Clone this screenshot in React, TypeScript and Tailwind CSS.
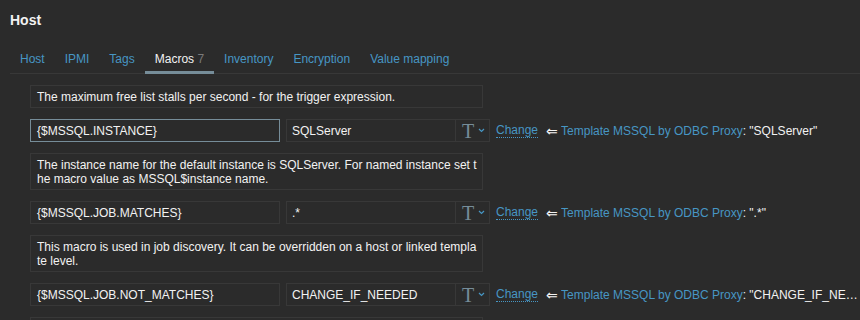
import React from 'react';

const tabs = ['Host', 'IPMI', 'Tags', 'Macros', 'Inventory', 'Encryption', 'Value mapping'];

const macros = [
  {
    description: 'The maximum free list stalls per second - for the trigger expression.',
  },
  {
    macro: '{$MSSQL.INSTANCE}',
    value: 'SQLServer',
    focused: true,
    description:
      'The instance name for the default instance is SQLServer. For named instance set the macro value as MSSQL$instance name.',
  },
  {
    macro: '{$MSSQL.JOB.MATCHES}',
    value: '.*',
    description:
      'This macro is used in job discovery. It can be overridden on a host or linked template level.',
  },
  {
    macro: '{$MSSQL.JOB.NOT_MATCHES}',
    value: 'CHANGE_IF_NEEDED',
    description: 'This macro is used in job discovery. It can be overridden on a host or linked template level.',
  },
];

function Description({ text }: { text: string }) {
  return (
    <div className="w-[453px] border border-[#383838] pl-[6px] pr-[4px] pt-[4px] pb-[3px] text-[12px] leading-[14px] text-[#f2f2f2] break-all">
      {text}
    </div>
  );
}

function MacroRow({ macro, value, focused }: { macro: string; value: string; focused?: boolean }) {
  return (
    <div className="flex items-center h-[23px] text-[12px] text-[#f2f2f2]">
      <div
        className={
          'w-[250px] h-[23px] shrink-0 flex items-center px-[6px] border ' +
          (focused ? 'border-[#768d99]' : 'border-[#383838]')
        }
      >
        {macro}
      </div>
      <div className="ml-[6px] w-[204px] h-[23px] shrink-0 flex">
        <div className="flex-1 flex items-center px-[5px] border border-[#383838]">{value}</div>
        <div className="w-[34px] flex items-center justify-center gap-[4px] pl-[2px] border border-l-0 border-[#383838]">
          <span className="font-['Liberation_Serif',serif] text-[20px] leading-[20px] text-[#768d99]">T</span>
          <svg width="7" height="5" viewBox="0 0 7 5">
            <polyline points="1,1 3.5,3.5 6,1" fill="none" stroke="#4796c4" strokeWidth="1.2" />
          </svg>
        </div>
      </div>
      <span className="ml-[6px] shrink-0 text-[#4796c4] border-b border-dotted border-[#4796c4] leading-[14px]">
        Change
      </span>
      <span className="ml-[8px] mr-[5px] w-[10px] shrink-0 text-[#f2f2f2] text-[14px] leading-[14px]">⇐</span>
      <span className="flex-1 min-w-0 truncate">
        <span className="text-[#4796c4]">Template MSSQL by ODBC Proxy</span>
        <span>: "{value}"</span>
      </span>
    </div>
  );
}

export default function App() {
  return (
    <div className="w-[860px] h-[320px] overflow-hidden bg-[#2b2b2b] font-['Liberation_Sans',Arial,sans-serif]">
      <div className="pl-[10px] pt-[12px] text-[14px] leading-[16px] font-bold text-[#f2f2f2]">Host</div>

      <div className="ml-[10px] mt-[24px] flex border-b border-[#383838]">
        {tabs.map((tab) => {
          const active = tab === 'Macros';
          return (
            <div
              key={tab}
              className={
                'px-[10px] pb-[5px] -mb-px text-[12px] leading-[14px] border-b-[3px] ' +
                (active ? 'border-[#768d99] text-[#f2f2f2]' : 'border-transparent text-[#4796c4]')
              }
            >
              {tab}
              {active && <span className="text-[#7a7a7a]"> 7</span>}
            </div>
          );
        })}
      </div>

      <div className="pl-[30px] pt-[11px] flex flex-col gap-[11px]">
        <Description text={macros[0].description} />
        {macros.slice(1).map((m) => (
          <React.Fragment key={m.macro}>
            <MacroRow macro={m.macro!} value={m.value!} focused={m.focused} />
            <Description text={m.description} />
          </React.Fragment>
        ))}
      </div>
    </div>
  );
}
